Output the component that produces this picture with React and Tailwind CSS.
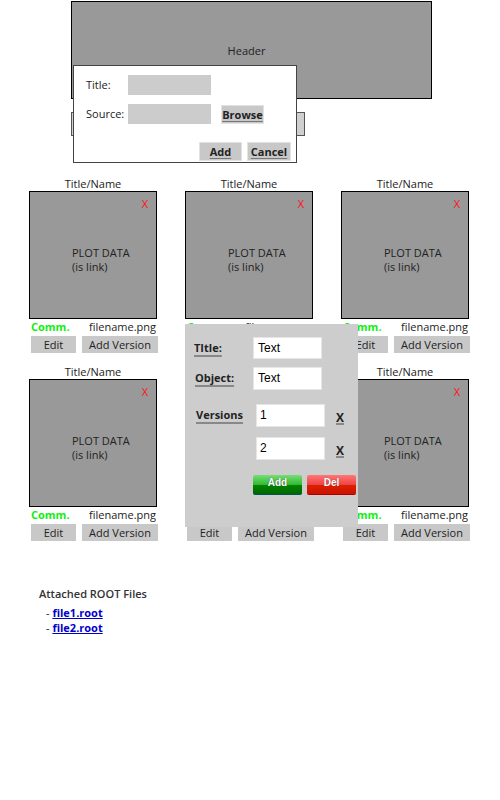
const cards = [0, 1, 2, 3, 4, 5]

// ── Plot card ─────────────────────────────────────────
function PlotCard() {
  return (
    <div className="flex flex-col w-[130px]">
      <div className="w-[128px] h-[15px] leading-[15px] text-center">Title/Name</div>
      <div className="relative w-[128px] h-[128px] border border-black bg-[#999] pl-[42px] pt-[54px] leading-[14px] text-[#222]">
        <span className="absolute top-[4px] right-[8px] text-[#ff1111] leading-[15px]">X</span>
        <div>PLOT DATA</div>
        <div>(is link)</div>
      </div>
      <div className="flex justify-between w-[128px] h-[15px] leading-[15px] pl-[2px] pr-[1px]">
        <span className="font-bold text-[#11ee11]">Comm.</span>
        <span>filename.png</span>
      </div>
      <div className="flex gap-[6px] pl-[2px] mt-[2px]">
        <div className="w-[45px] h-[17px] leading-[17px] bg-[#c8c8c8] text-center">Edit</div>
        <div className="w-[76px] h-[17px] leading-[17px] bg-[#c8c8c8] text-center">Add Version</div>
      </div>
    </div>
  )
}

function GrayButton({ label, width }) {
  return (
    <div className={`${width} h-[19px] leading-[17px] bg-[#c8c8c8] border border-[#e2e2e2] text-center font-bold underline decoration-[#777] underline-offset-[2px]`}>
      {label}
    </div>
  )
}

export default function App() {
  return (
    <div className="relative w-[500px] h-[800px] bg-white text-[11px] text-[#222] font-['Open_Sans',sans-serif] overflow-hidden">
      {/* Header */}
      <div className="mt-[1px] ml-[71px] w-[361px] h-[98px] border border-black bg-[#999] flex items-center justify-center pr-[10px] pt-[3px]">
        Header
      </div>
      <div className="mt-[13px] ml-[71px] w-[234px] h-[24px] border border-[#555] bg-[#d0d0d0]" />

      {/* Cards */}
      <div className="mt-[40px] pl-[29px] grid grid-cols-[130px_130px_130px] gap-x-[26px] gap-y-[11px]">
        {cards.map(i => (
          <PlotCard key={i} />
        ))}
      </div>

      {/* Attached files */}
      <div className="mt-[45px] ml-[39px]">
        <div className="leading-[15px] font-semibold text-[#333]">Attached ROOT Files</div>
        <div className="mt-[4px] ml-[7px] leading-[15px]">
          <div>- <span className="font-bold text-[#0000cc] underline">file1.root</span></div>
          <div>- <span className="font-bold text-[#0000cc] underline">file2.root</span></div>
        </div>
      </div>

      {/* Add dialog */}
      <div className="absolute left-[73px] top-[65px] w-[224px] h-[98px] border border-[#444] bg-white pt-[9px] pl-[12px] pr-[5px]">
        <div className="flex items-center h-[20px]">
          <span className="w-[42px]">Title:</span>
          <div className="w-[83px] h-[20px] bg-[#cccccc]" />
        </div>
        <div className="flex items-center h-[20px] mt-[9px]">
          <span className="w-[42px]">Source:</span>
          <div className="w-[83px] h-[20px] bg-[#cccccc]" />
          <div className="ml-[10px]"><GrayButton label="Browse" width="w-[43px]" /></div>
        </div>
        <div className="flex justify-end gap-[5px] mt-[18px]">
          <GrayButton label="Add" width="w-[43px]" />
          <GrayButton label="Cancel" width="w-[44px]" />
        </div>
      </div>

      {/* Edit popover */}
      <div className="absolute left-[185px] top-[324px] w-[173px] h-[203px] bg-[#cdcdcd] pl-[9px] pt-[13px]">
        <div className="flex items-center h-[22px]">
          <span className="w-[59px] font-bold underline decoration-[#888] decoration-[2px] underline-offset-[3px]">TItle:</span>
          <div className="w-[69px] h-[22px] bg-white border border-[#e6e6e6] pl-[4px] leading-[20px] text-[12px] text-black font-['Liberation_Sans',sans-serif]">Text</div>
        </div>
        <div className="flex items-center h-[23px] mt-[8px]">
          <span className="w-[59px] pl-[1px] font-bold underline decoration-[#888] decoration-[2px] underline-offset-[3px]">Object:</span>
          <div className="w-[69px] h-[23px] bg-white border border-[#e6e6e6] pl-[4px] leading-[21px] text-[12px] text-black font-['Liberation_Sans',sans-serif]">Text</div>
        </div>
        <div className="flex items-start h-[23px] mt-[14px]">
          <span className="w-[62px] pl-[2px] leading-[22px] font-bold underline decoration-[#888] decoration-[2px] underline-offset-[3px]">Versions</span>
          <div className="w-[69px] h-[23px] bg-white border border-[#e6e6e6] pl-[3px] leading-[21px] text-[12px] text-black font-['Liberation_Sans',sans-serif]">1</div>
          <span className="ml-[11px] mt-[6px] text-[12px] leading-[16px] font-bold underline decoration-[#888] decoration-[2px]">X</span>
        </div>
        <div className="flex items-start h-[23px] mt-[10px] pl-[62px]">
          <div className="w-[69px] h-[23px] bg-white border border-[#e6e6e6] pl-[3px] leading-[21px] text-[12px] text-black font-['Liberation_Sans',sans-serif]">2</div>
          <span className="ml-[11px] mt-[6px] text-[12px] leading-[16px] font-bold underline decoration-[#888] decoration-[2px]">X</span>
        </div>
        <div className="flex gap-[5px] mt-[15px] pl-[59px] font-['Liberation_Sans',sans-serif] text-[10px] font-bold text-white">
          <div className="w-[49px] h-[20px] leading-[16px] text-center rounded-[2px] border-b border-[#055] [text-shadow:0_0_1px_#333] bg-[linear-gradient(to_bottom,#77dd77_0%,#33bb33_50%,#008800_50%,#006600_100%)]">
            Add
          </div>
          <div className="w-[49px] h-[20px] leading-[16px] text-center rounded-[2px] border-b border-[#a00] [text-shadow:0_0_1px_#733] bg-[linear-gradient(to_bottom,#ff7777_0%,#ee4444_50%,#dd2200_50%,#cc1100_100%)]">
            Del
          </div>
        </div>
      </div>
    </div>
  )
}
